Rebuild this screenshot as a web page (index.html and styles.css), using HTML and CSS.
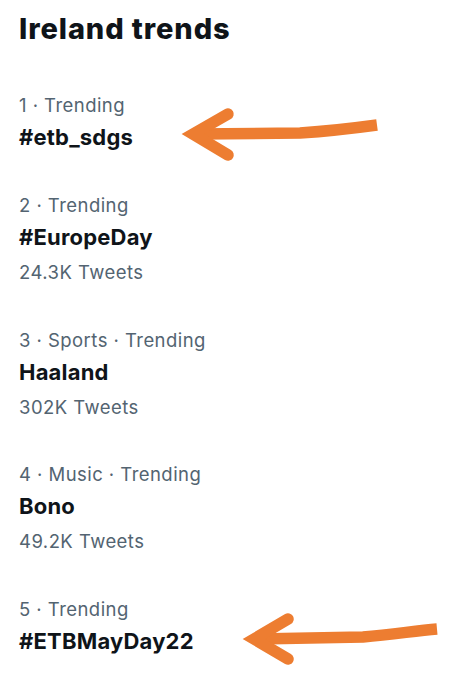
FILE: index.html
```html
<!DOCTYPE html>
<html lang="en">
<head>
<meta charset="utf-8">
<title>Ireland trends</title>
<link rel="stylesheet" href="styles.css">
</head>
<body>
<main class="panel">
  <h1 class="title">Ireland trends</h1>
  <ul class="trends">
    <li class="trend">
      <div class="meta">1 · Trending</div>
      <div class="name">#etb_sdgs</div>
    </li>
    <li class="trend">
      <div class="meta">2 · Trending</div>
      <div class="name">#EuropeDay</div>
      <div class="count">24.3K Tweets</div>
    </li>
    <li class="trend">
      <div class="meta">3 · Sports · Trending</div>
      <div class="name">Haaland</div>
      <div class="count">302K Tweets</div>
    </li>
    <li class="trend">
      <div class="meta">4 · Music · Trending</div>
      <div class="name">Bono</div>
      <div class="count">49.2K Tweets</div>
    </li>
    <li class="trend">
      <div class="meta">5 · Trending</div>
      <div class="name">#ETBMayDay22</div>
    </li>
  </ul>
  <svg class="annotations" width="472" height="698" viewBox="0 0 472 698" aria-hidden="true">
    <g fill="none" stroke="#ED7D31" stroke-width="11.5">
      <path d="M196 134 L300 133 C330 131 355 128 377 125" stroke-linecap="butt"/>
      <path d="M228 114 L193 134 L228 155" stroke-linecap="round" stroke-linejoin="miter" stroke-miterlimit="10"/>
      <path d="M257 639 L363 637 C395 634 415 631 437 629" stroke-linecap="butt"/>
      <path d="M288 619 L254 639 L288 659" stroke-linecap="round" stroke-linejoin="miter" stroke-miterlimit="10"/>
    </g>
  </svg>
</main>
</body>
</html>
```

FILE: styles.css
```css
* {
  box-sizing: border-box;
}

html, body {
  margin: 0;
  padding: 0;
  background: #ffffff;
}

.panel {
  position: relative;
  width: 472px;
  height: 698px;
  padding-left: 19px;
  font-family: Inter, Roboto, "Liberation Sans", Arial, sans-serif;
  overflow: hidden;
}

.title {
  margin: 9px 0 0 0;
  font-size: 29px;
  line-height: 40px;
  font-weight: 800;
  letter-spacing: 0.9px;
  color: #0f1419;
}

.trends {
  list-style: none;
  margin: 23.5px 0 0 0;
  padding: 0;
}

.trend {
  padding: 17px 0 18.5px 0;
}

.meta,
.count {
  font-size: 18.5px;
  line-height: 30px;
  letter-spacing: 0.45px;
  color: #536471;
}

.count {
  line-height: 34px;
}

.name {
  font-size: 22px;
  line-height: 35px;
  font-weight: 700;
  letter-spacing: 0.2px;
  color: #0f1419;
}

.annotations {
  position: absolute;
  left: 0;
  top: 0;
  pointer-events: none;
}
```
